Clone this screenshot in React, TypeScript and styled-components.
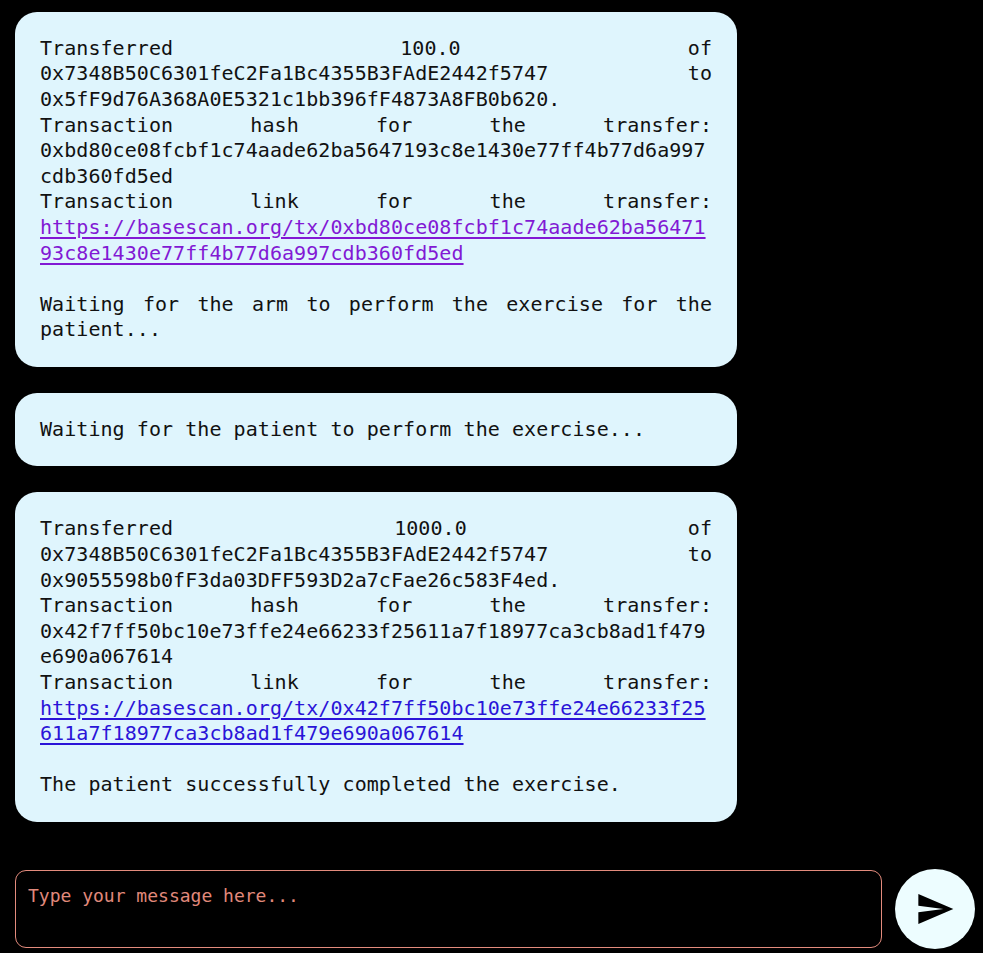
import React from "react";
import styled, { createGlobalStyle } from "styled-components";

const GlobalStyle = createGlobalStyle`
  html, body {
    margin: 0;
    padding: 0;
    background: #000;
    height: 100%;
  }
  #root { height: 100%; }
  * { box-sizing: border-box; }
`;

const Page = styled.div`
  height: 100vh;
  display: flex;
  flex-direction: column;
  background: #000;
  font-family: "DejaVu Sans Mono", "Liberation Mono", monospace;
  overflow: hidden;
`;

const MessageList = styled.div`
  flex: 1;
  display: flex;
  flex-direction: column;
  justify-content: flex-end;
  gap: 26px;
  padding: 12px 15px 0 15px;
  overflow: hidden;
`;

const Bubble = styled.div`
  flex-shrink: 0;
  width: 722px;
  background: #dff5fd;
  color: #111;
  border-radius: 22px;
  padding: 24px 25px;
  font-size: 20px;
  line-height: 25.6px;
  letter-spacing: 0.06px;
  white-space: pre-line;
  text-align: justify;
  overflow-wrap: anywhere;
`;

const TxLink = styled.a<{ $visited?: boolean }>`
  color: ${(p) => (p.$visited ? "#8219d4" : "#2a14d8")};
  text-decoration: underline;
  text-underline-offset: 3px;
`;

const Composer = styled.div`
  flex-shrink: 0;
  display: flex;
  align-items: center;
  gap: 13px;
  padding: 0 8px 4px 15px;
  margin-top: 47px;
`;

const MessageInput = styled.textarea`
  flex: 1;
  height: 78px;
  background: #000;
  border: 1.5px solid #e38b7d;
  border-radius: 11px;
  padding: 14px 12px;
  font-family: "DejaVu Sans Mono", "Liberation Mono", monospace;
  font-size: 18px;
  line-height: 22px;
  color: #e8998c;
  resize: none;
  outline: none;
  &::placeholder {
    color: #e0897b;
  }
`;

const SendButton = styled.button`
  width: 80px;
  height: 80px;
  flex: 0 0 80px;
  border-radius: 50%;
  border: none;
  background: #edfdff;
  display: flex;
  align-items: center;
  justify-content: center;
  padding: 0;
  cursor: pointer;
`;

const SendIcon = () => (
  <svg width="40" height="40" viewBox="0 0 24 24" aria-hidden="true">
    <path d="M2.01 21L23 12 2.01 3 2 10l15 2-15 2z" fill="#000" />
  </svg>
);

export default function App() {
  return (
    <>
      <GlobalStyle />
      <Page>
        <MessageList>
          <Bubble>
            {"Transferred 100.0 of 0x7348B50C6301feC2Fa1Bc4355B3FAdE2442f5747 to 0x5fF9d76A368A0E5321c1bb396fF4873A8FB0b620.\nTransaction hash for the transfer: 0xbd80ce08fcbf1c74aade62ba5647193c8e1430e77ff4b77d6a997cdb360fd5ed\nTransaction link for the transfer: "}
            <TxLink $visited href="#">
              https://basescan.org/tx/0xbd80ce08fcbf1c74aade62ba5647193c8e1430e77ff4b77d6a997cdb360fd5ed
            </TxLink>
            {"\n\nWaiting for the arm to perform the exercise for the patient..."}
          </Bubble>
          <Bubble>Waiting for the patient to perform the exercise...</Bubble>
          <Bubble>
            {"Transferred 1000.0 of 0x7348B50C6301feC2Fa1Bc4355B3FAdE2442f5747 to 0x9055598b0fF3da03DFF593D2a7cFae26c583F4ed.\nTransaction hash for the transfer: 0x42f7ff50bc10e73ffe24e66233f25611a7f18977ca3cb8ad1f479e690a067614\nTransaction link for the transfer: "}
            <TxLink href="#">
              https://basescan.org/tx/0x42f7ff50bc10e73ffe24e66233f25611a7f18977ca3cb8ad1f479e690a067614
            </TxLink>
            {"\n\nThe patient successfully completed the exercise."}
          </Bubble>
        </MessageList>
        <Composer>
          <MessageInput placeholder="Type your message here..." />
          <SendButton aria-label="Send">
            <SendIcon />
          </SendButton>
        </Composer>
      </Page>
    </>
  );
}
